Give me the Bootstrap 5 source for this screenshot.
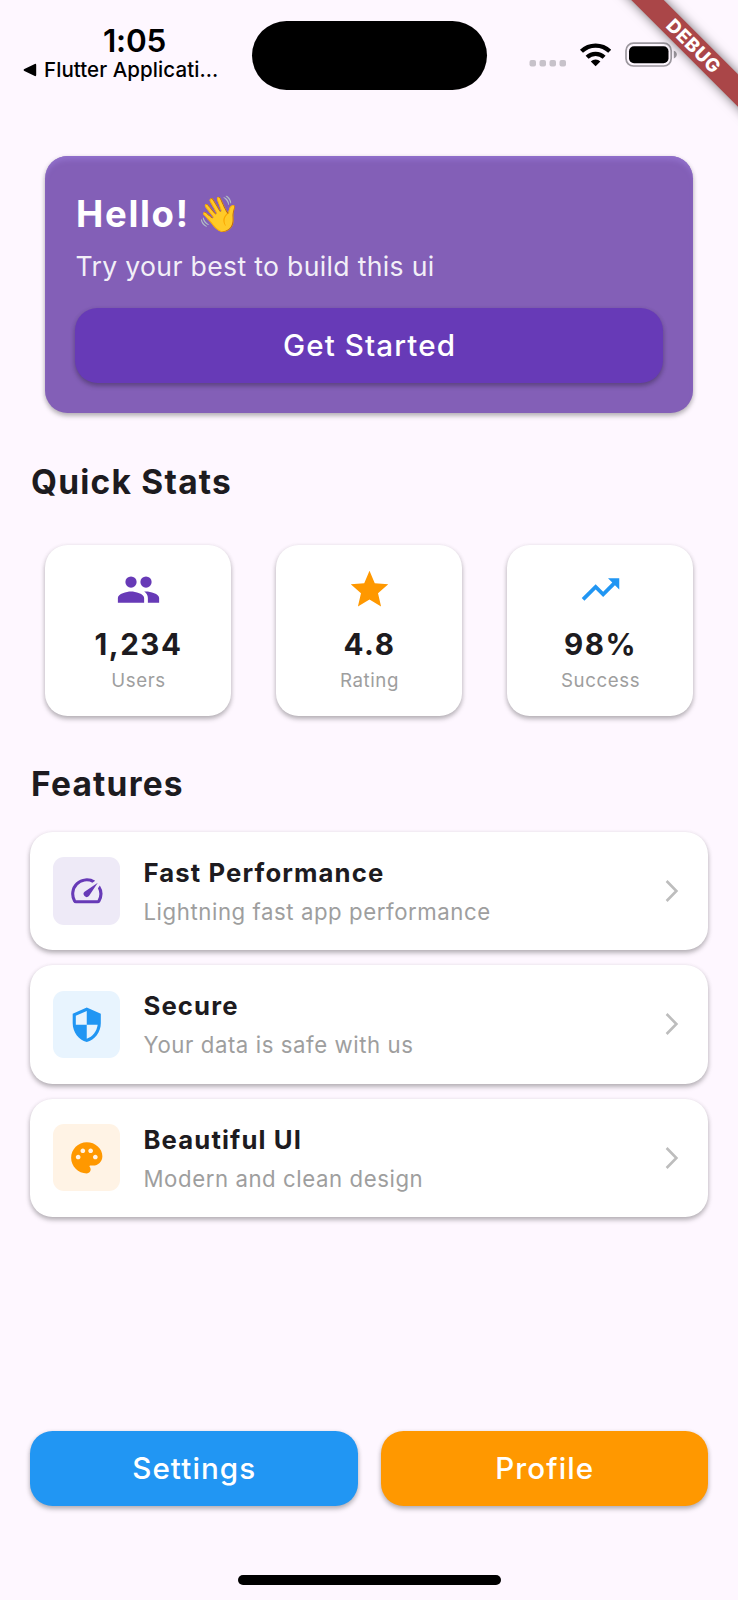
<!DOCTYPE html>
<html lang="en">
<head>
<meta charset="utf-8">
<meta name="viewport" content="width=device-width, initial-scale=1">
<title>Home</title>
<link href="https://cdn.jsdelivr.net/npm/bootstrap@5.3.0/dist/css/bootstrap.min.css" rel="stylesheet">
<style>
  :root { --violet: #673ab7; --blue: #2196f3; --amber: #ff9800; --ink: #1d1b20; --muted: #9e9e9e; --lift: 0 3px 5px rgba(0,0,0,.25), 0 1px 5px rgba(0,0,0,.09); }
  body { font-family: Inter, "Noto Color Emoji", sans-serif; background: #fef7ff; color: var(--ink); }
  .screen { width: 738px; height: 1600px; overflow: hidden; }
  .status { height: 156px; padding: 21px 0 0 23px; }
  .status-left { width: 229px; flex: none; padding-top: 4px; }
  .clock { font-size: 31.5px; font-weight: 600; line-height: 32px; letter-spacing: -.2px; padding-left: 80px; color: #000; }
  .back-app { font-size: 20.5px; font-weight: 500; line-height: 25px; letter-spacing: .07px; gap: 7px; color: #000; }
  .island { width: 235px; height: 69px; flex: none; border-radius: 35px; background: #000; }
  .indicators { margin-left: 42px; height: 69px; }
  .ribbon { left: 593px; top: 33.5px; width: 200px; height: 23px; padding-left: 2px; transform: rotate(45deg); background: #aa4648; box-shadow: 0 0 11px rgba(0,0,0,.55); color: #fff; font-size: 18.6px; font-weight: 800; letter-spacing: .7px; line-height: 23px; }
  .lifted { box-shadow: var(--lift); border: 0; border-radius: 22.5px; }
  .hero { margin: 0 15px; height: 257px; padding: 36px 30px 30px; background: #835fb7; color: #fff; box-shadow: var(--lift), inset 0 6px 5px -2px #9170cb; }
  .hello { font-size: 36.5px; font-weight: 700; letter-spacing: 1.7px; line-height: 44px; padding-left: 1px; }
  .hello .wave { letter-spacing: 0; margin-left: 8px; font-size: 35px; line-height: 1; position: relative; top: -1.5px; }
  .tagline { font-size: 26.6px; letter-spacing: .33px; line-height: 34px; margin: 13px 0 0 .5px; opacity: .9; }
  .action { height: 75px; color: #fff; font-size: 29.6px; font-weight: 500; letter-spacing: 1.1px; line-height: 36px; padding: 0 0 1px 1px; }
  .action:hover { color: #fff; }
  .bg-violet { background: var(--violet); } .bg-azure { background: var(--blue); } .bg-amber { background: var(--amber); }
  .content { padding: 0 30px; }
  .heading { font-size: 33.5px; font-weight: 700; letter-spacing: 1.22px; line-height: 40px; padding-left: 1px; }
  .heading-stats { margin-top: 49px; } .heading-features { margin-top: 48px; }
  .stats { display: grid; grid-template-columns: repeat(3, 186px); gap: 45px; margin: 42.5px 15px 0; }
  .stat { height: 171.5px; padding-top: 22.5px; background: #fff; text-align: center; }
  .stat-value { font-size: 29.6px; font-weight: 700; letter-spacing: 1.5px; line-height: 36px; margin-top: 14px; padding-left: 1px; }
  .stat-label { font-size: 18.7px; letter-spacing: .6px; line-height: 24px; margin-top: 7px; padding-left: 1px; color: var(--muted); }
  .features { gap: 15px; margin-top: 28px; }
  .feature { height: 118.3px; padding: 0 29px 0 22.5px; background: #fff; }
  .tile { width: 67.5px; height: 67.5px; border-radius: 11px; flex: none; margin-right: 23.5px; }
  .feature-title { font-size: 25.7px; font-weight: 700; letter-spacing: 1.12px; line-height: 32px; margin-top: 1px; }
  .feature-text { font-size: 22.2px; letter-spacing: .57px; line-height: 28px; margin-top: 9px; color: var(--muted); }
  .actions { display: grid; grid-template-columns: 1fr 1fr; gap: 23px; margin-top: 214px; }
  .home-bar { width: 263px; height: 9.5px; border-radius: 5px; background: #000; margin: 69.5px auto 0; }
  .tile-violet { background: #eeeaf7; } .tile-azure { background: #e8f4fe; } .tile-amber { background: #fff3e5; }
  svg { display: block; flex: none; }
</style>
</head>
<body>
<div class="screen position-relative">
  <header class="status d-flex align-items-start">
    <div class="status-left">
      <div class="clock">1:05</div>
      <div class="back-app d-flex align-items-center">
        <svg width="14" height="14" viewBox="0 0 14 14"><path d="M1.4 6.1 11.8.9q1.4-.5 1.4 1v10.2q0 1.5-1.4 1L1.4 7.9q-1.6-.9 0-1.8z"/></svg>
        <span class="text-nowrap">Flutter Applicati...</span>
      </div>
    </div>
    <div class="island"></div>
    <div class="indicators">
      <svg width="150" height="69" viewBox="529 21 150 69">
        <g fill="#c7c2ca"><rect x="529.5" y="60" width="6.5" height="6.5" rx="2"/><rect x="539.5" y="60" width="6.5" height="6.5" rx="2"/><rect x="549.5" y="60" width="6.5" height="6.5" rx="2"/><rect x="559.5" y="60" width="6.5" height="6.5" rx="2"/></g>
        <g fill="none" stroke="#000" stroke-width="4.3"><path d="M581.5 51.3a20.2 20.2 0 0 1 28.2 0"/><path d="M587.1 57.3a12.3 12.3 0 0 1 17 0"/></g>
        <path d="M595.6 66.3l-4.8-4.9a7 7 0 0 1 9.6 0z"/>
        <rect x="626" y="43.2" width="45.2" height="22.8" rx="7.5" fill="none" stroke="#9c979e" stroke-width="1.7"/>
        <rect x="629" y="46.2" width="39.5" height="17" rx="5"/>
        <path d="M673.8 50.8q3 1 3 3.8t-3 3.8z" fill="#9c979e"/>
      </svg>
    </div>
  </header>
  <div class="ribbon position-absolute text-center">DEBUG</div>

  <main class="content">
    <section class="hero card lifted">
      <div class="hello">Hello!<span class="wave">👋</span></div>
      <p class="tagline">Try your best to build this ui</p>
      <button class="btn action lifted bg-violet w-100 mt-auto">Get Started</button>
    </section>

    <h2 class="heading heading-stats mb-0">Quick Stats</h2>
    <section class="stats">
      <div class="stat lifted">
        <svg class="mx-auto" width="45" height="45" viewBox="0 0 24 24" fill="#673ab7"><circle cx="16" cy="8" r="3"/><circle cx="8" cy="8" r="3"/><path d="M8 13c-2.33 0-7 1.17-7 3.5V19h14v-2.5c0-2.33-4.67-3.5-7-3.5zm8 0c-.29 0-.62.02-.97.05 1.16.84 1.97 1.97 1.97 3.45V19h6v-2.5c0-2.33-4.67-3.5-7-3.5z"/></svg>
        <div class="stat-value">1,234</div><div class="stat-label">Users</div>
      </div>
      <div class="stat lifted">
        <svg class="mx-auto" width="45" height="45" viewBox="0 0 24 24" fill="#ff9800"><path d="M12 17.27 18.18 21l-1.64-7.03L22 9.24l-7.19-.61L12 2 9.19 8.63 2 9.24l5.46 4.73L5.82 21z"/></svg>
        <div class="stat-value">4.8</div><div class="stat-label">Rating</div>
      </div>
      <div class="stat lifted">
        <svg class="mx-auto" width="45" height="45" viewBox="0 0 24 24" fill="#2196f3"><path d="m16 6 2.29 2.29-4.88 4.88-4-4L2 16.59 3.41 18l6-6 4 4 6.3-6.29L22 12V6z"/></svg>
        <div class="stat-value">98%</div><div class="stat-label">Success</div>
      </div>
    </section>

    <h2 class="heading heading-features mb-0">Features</h2>
    <section class="features d-flex flex-column">
      <div class="feature lifted d-flex align-items-center">
        <div class="tile tile-violet d-flex align-items-center justify-content-center"><svg width="37.5" height="37.5" viewBox="0 0 24 24" fill="#673ab7"><path d="m20.38 8.57-1.23 1.85a8 8 0 0 1-.22 7.58H5.07A8 8 0 0 1 15.58 6.85l1.85-1.23A10 10 0 0 0 3.35 19a2 2 0 0 0 1.72 1h13.85a2 2 0 0 0 1.74-1 10 10 0 0 0-.27-10.44zm-9.79 6.84a2 2 0 0 0 2.83 0l5.66-8.49-8.49 5.66a2 2 0 0 0 0 2.83z"/></svg></div>
        <div class="flex-grow-1"><div class="feature-title">Fast Performance</div><div class="feature-text">Lightning fast app performance</div></div>
        <svg width="14" height="22" viewBox="0 0 14 22" fill="none" stroke="#bdbdbd" stroke-width="2.6"><path d="M1.6 1l9.8 10-9.8 10"/></svg>
      </div>
      <div class="feature lifted d-flex align-items-center">
        <div class="tile tile-azure d-flex align-items-center justify-content-center"><svg width="37.5" height="37.5" viewBox="0 0 24 24" fill="#2196f3"><path d="M12 1 3 5v6c0 5.55 3.84 10.74 9 12 5.16-1.26 9-6.45 9-12V5l-9-4zm0 10.99h7c-.53 4.12-3.28 7.79-7 8.94V12H5V6.3l7-3.11v8.8z"/></svg></div>
        <div class="flex-grow-1"><div class="feature-title">Secure</div><div class="feature-text">Your data is safe with us</div></div>
        <svg width="14" height="22" viewBox="0 0 14 22" fill="none" stroke="#bdbdbd" stroke-width="2.6"><path d="M1.6 1l9.8 10-9.8 10"/></svg>
      </div>
      <div class="feature lifted d-flex align-items-center">
        <div class="tile tile-amber d-flex align-items-center justify-content-center"><svg width="37.5" height="37.5" viewBox="0 0 24 24" fill="#ff9800"><path d="M12 2C6.49 2 2 6.49 2 12s4.49 10 10 10c1.38 0 2.5-1.12 2.5-2.5 0-.61-.23-1.2-.64-1.67-.08-.1-.13-.21-.13-.33 0-.28.22-.5.5-.5H16c3.31 0 6-2.69 6-6 0-4.96-4.49-9-10-9zm5.5 11c-.83 0-1.5-.67-1.5-1.5s.67-1.5 1.5-1.5 1.5.67 1.5 1.5-.67 1.5-1.5 1.5zm-3-4c-.83 0-1.5-.67-1.5-1.5S13.67 6 14.5 6s1.5.67 1.5 1.5S15.33 9 14.5 9zM5 11.5c0-.83.67-1.5 1.5-1.5s1.5.67 1.5 1.5S7.33 13 6.5 13 5 12.33 5 11.5zm6-4c0 .83-.67 1.5-1.5 1.5S8 8.33 8 7.5 8.67 6 9.5 6s1.5.67 1.5 1.5z"/></svg></div>
        <div class="flex-grow-1"><div class="feature-title">Beautiful UI</div><div class="feature-text">Modern and clean design</div></div>
        <svg width="14" height="22" viewBox="0 0 14 22" fill="none" stroke="#bdbdbd" stroke-width="2.6"><path d="M1.6 1l9.8 10-9.8 10"/></svg>
      </div>
    </section>

    <div class="actions">
      <button class="btn action lifted bg-azure">Settings</button>
      <button class="btn action lifted bg-amber">Profile</button>
    </div>
  </main>
  <div class="home-bar"></div>
</div>
<script src="https://cdn.jsdelivr.net/npm/bootstrap@5.3.0/dist/js/bootstrap.bundle.min.js"></script>
</body>
</html>
